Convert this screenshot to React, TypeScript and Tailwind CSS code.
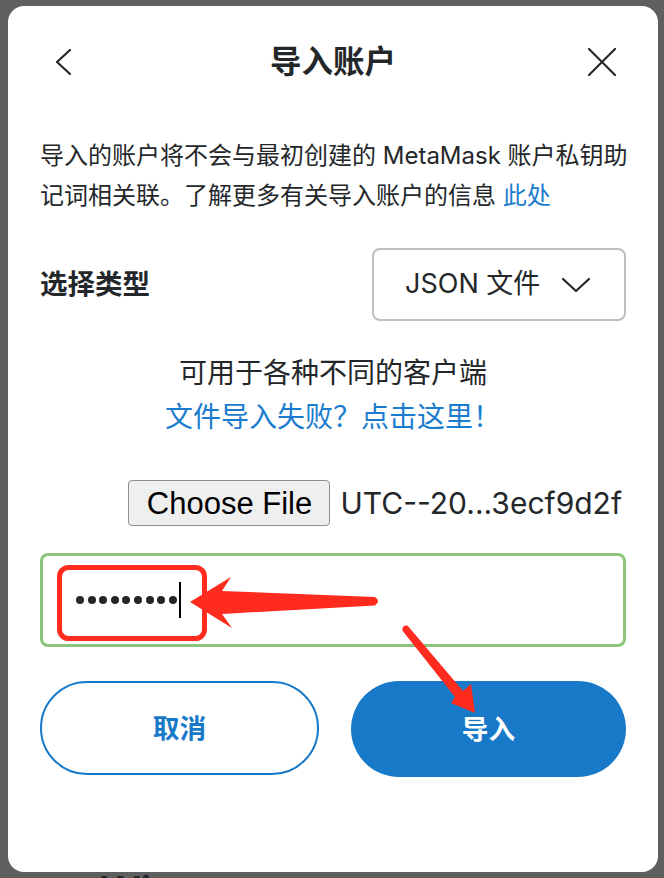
import { useState } from "react";

const BLUE = "#1879c8";

function Dots({ count }: { count: number }) {
  return (
    <div className="flex items-center gap-[3.6px]">
      {Array.from({ length: count }).map((_, i) => (
        <span key={i} className="block h-[8px] w-[8px] rounded-full bg-[#24272a]" />
      ))}
    </div>
  );
}

export default function App() {
  const [fileType] = useState("JSON 文件");

  return (
    <div className="relative h-[878px] w-[664px] overflow-hidden bg-[#5f5f5f] pl-[8px] pt-[6px] font-['Inter','Noto_Sans_CJK_SC',sans-serif] text-[#24272a]">
      {/* 弹窗卡片 */}
      <div className="relative z-10 h-[866px] w-[650px] rounded-[16px] bg-white px-[32px]">
        {/* 标题栏 */}
        <div className="flex h-[84px] items-center justify-between pt-[28px]">
          <button className="flex w-[40px] items-center pl-[16px]">
            <svg width="16" height="26" viewBox="0 0 16 26" fill="none">
              <polyline points="14,1 1,13 14,25" stroke="#24272a" strokeWidth="2.2" strokeLinecap="round" strokeLinejoin="round" />
            </svg>
          </button>
          <h1 className="flex-1 text-center text-[31.5px] font-bold leading-none">导入账户</h1>
          <button className="flex w-[40px] items-center pl-[2px]">
            <svg width="28" height="28" viewBox="0 0 28 28" fill="none">
              <line x1="1" y1="1" x2="27" y2="27" stroke="#24272a" strokeWidth="2.2" strokeLinecap="round" />
              <line x1="27" y1="1" x2="1" y2="27" stroke="#24272a" strokeWidth="2.2" strokeLinecap="round" />
            </svg>
          </button>
        </div>

        {/* 说明 */}
        <p className="mt-[46px] text-[24px] leading-[40px]">
          <span className="whitespace-nowrap">导入的账户将不会与最初创建的 MetaMask 账户私钥助</span>
          <br />
          <span className="whitespace-nowrap">
            记词相关联。了解更多有关导入账户的信息 <span className="text-[#1a7cce]">此处</span>
          </span>
        </p>

        {/* 选择类型 */}
        <div className="mt-[32px] flex items-center justify-between">
          <span className="text-[27.5px] font-semibold">选择类型</span>
          <div className="flex h-[73px] w-[254px] items-center gap-[22px] rounded-[8px] border-2 border-[#bbc0c5] pl-[31px]">
            <span className="text-[27px]">{fileType}</span>
            <svg width="28" height="16" viewBox="0 0 28 16" fill="none">
              <polyline points="1,2 14,14 27,2" stroke="#24272a" strokeWidth="2.2" strokeLinecap="round" strokeLinejoin="round" />
            </svg>
          </div>
        </div>

        {/* 文件说明 */}
        <div className="mt-[30px] text-center text-[28px] leading-[44px]">
          <p>可用于各种不同的客户端</p>
          <p className="text-[#1a7cce]">文件导入失败？点击这里！</p>
        </div>

        {/* 文件选择 */}
        <div className="mt-[41px] flex items-center justify-end gap-[10px] pr-[4px]">
          <button className="h-[46px] w-[202px] rounded-[4px] border border-[#8f8f8f] bg-[#efefef] font-['Liberation_Sans',Arial,sans-serif] text-[31px] leading-none text-black">
            Choose File
          </button>
          <span className="text-[30px] leading-none">UTC--20...3ecf9d2f</span>
        </div>

        {/* 密码输入 */}
        <div className="mt-[27px] flex h-[94px] items-center rounded-[8px] border-[3px] border-[#8cc47c] pl-[33px]">
          <Dots count={9} />
          <span className="ml-[2px] block h-[36px] w-[2px] bg-black" />
        </div>

        {/* 按钮 */}
        <div className="mt-[34px] flex gap-[32px]">
          <button className="flex h-[94px] flex-1 items-center justify-center rounded-full border-2 border-[#1879c8] text-[26.7px] font-bold text-[#1879c8]">
            取消
          </button>
          <button
            className="flex h-[96px] flex-1 items-center justify-center rounded-full text-[26.7px] font-bold text-white"
            style={{ backgroundColor: BLUE }}
          >
            导入
          </button>
        </div>
      </div>

      {/* 卡片下方露出的文字 */}
      <div className="-mt-[1px] pl-[92px] text-[40px] font-semibold leading-none text-[#24272a]">Wi</div>

      {/* 标注 */}
      <svg className="pointer-events-none absolute left-0 top-0 z-20" width="664" height="878" viewBox="0 0 664 878">
        <rect x="59.5" y="567.5" width="145" height="71" rx="9" fill="none" stroke="#ff2b1f" strokeWidth="5" />
        <path
          d="M190,602 L231,577 L222,591 L375,597 Q381,601 375,605.5 L222,614 L232,628 Z"
          fill="#ff2b1f"
        />
        <path
          d="M475,713 L451,703 L455,697 L402.3,630.4 Q402.5,624.5 407.7,625.8 L463,691 L471,684 Z"
          fill="#ff2b1f"
        />
      </svg>
    </div>
  );
}
